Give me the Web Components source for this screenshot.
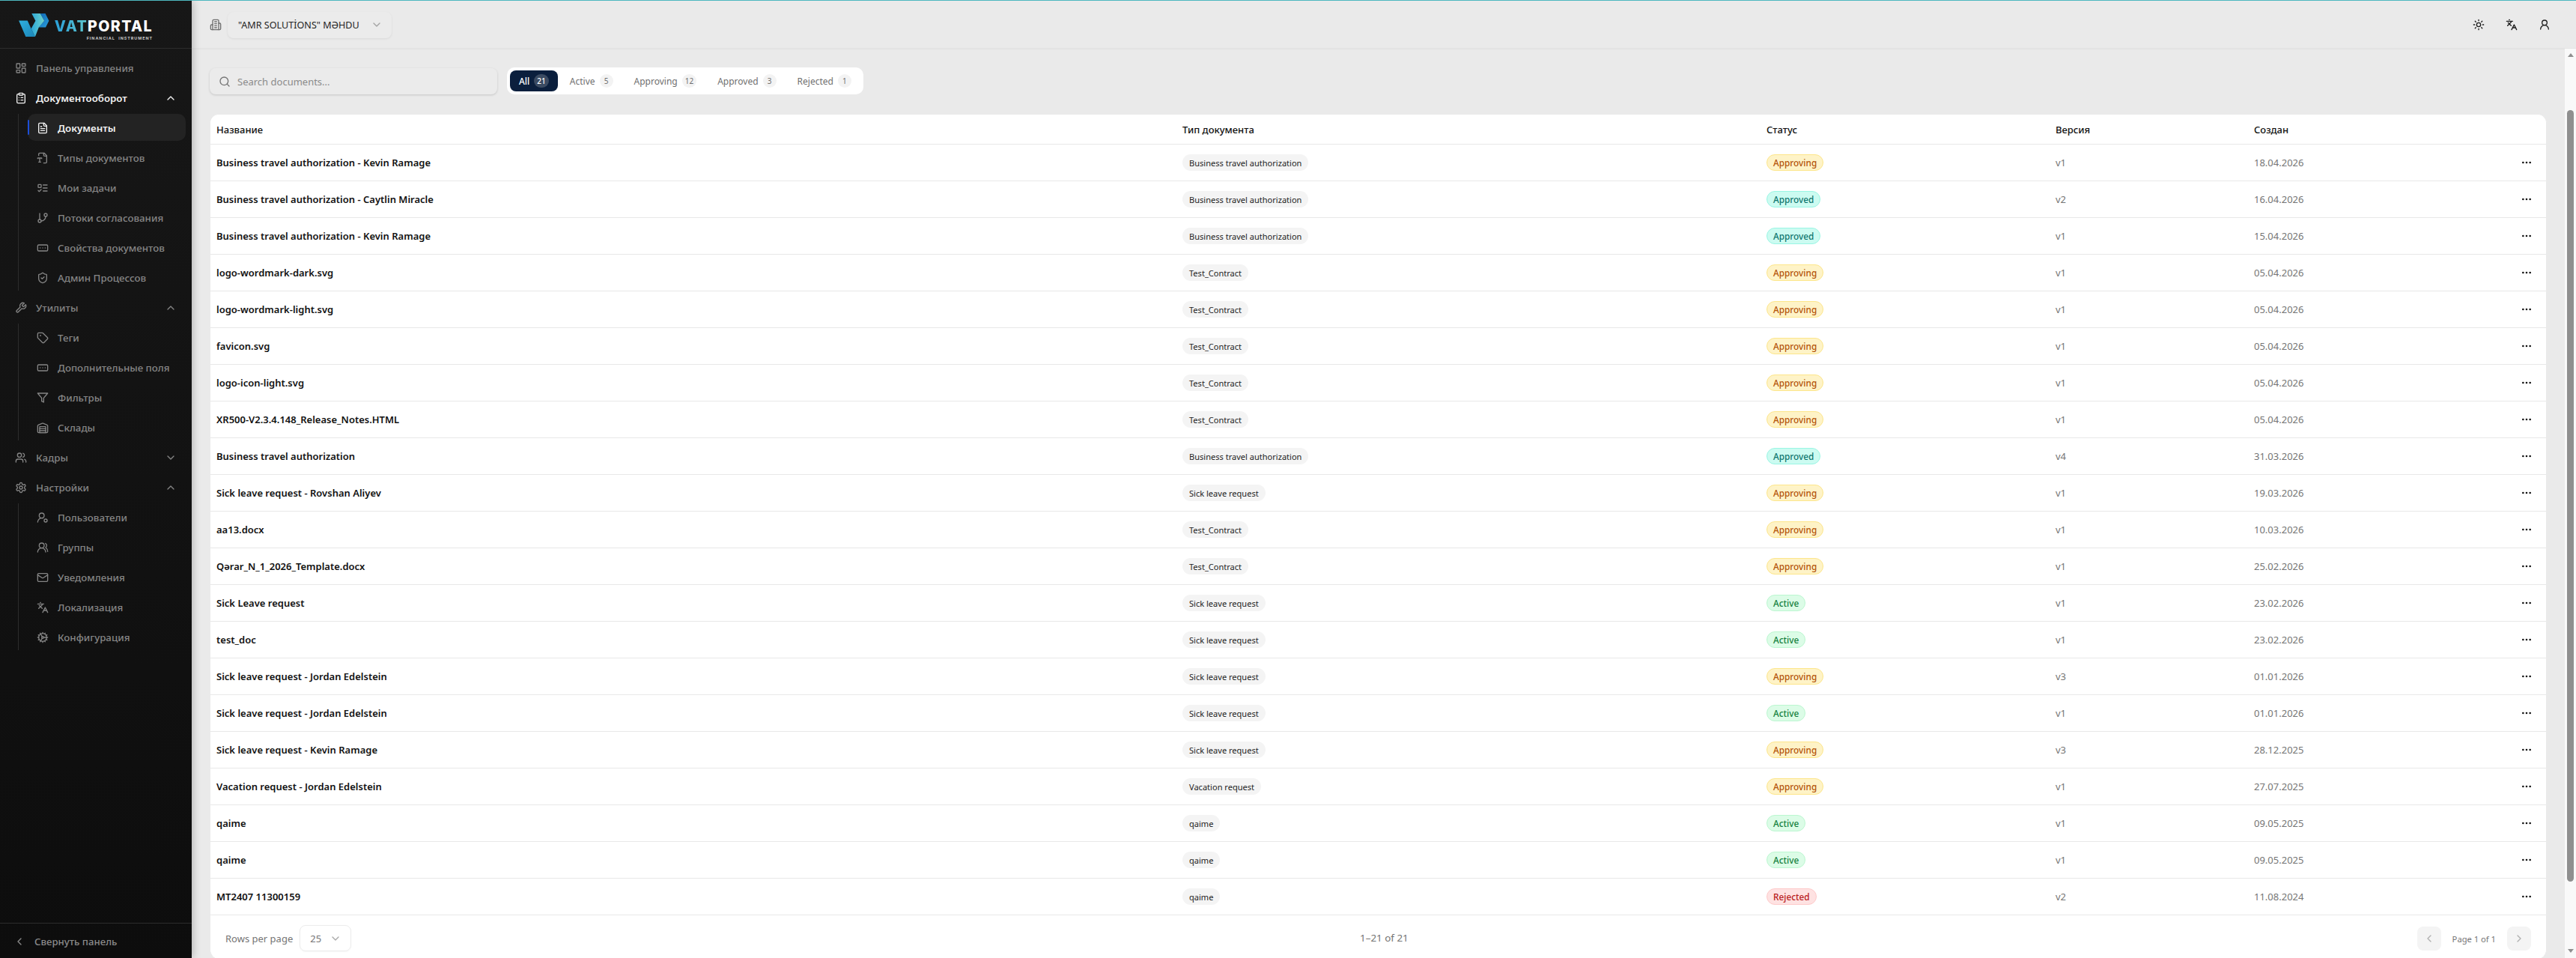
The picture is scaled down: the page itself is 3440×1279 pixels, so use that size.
<!DOCTYPE html>
<html lang="ru">
<head>
<meta charset="utf-8">
<title>VAT Portal</title>
<style>
  html, body { margin: 0; height: 100%; overflow: hidden; }
  body { background: #eaeaea; font-family: "Noto Sans", "Open Sans", sans-serif; font-size: 13px; color: #111; }
</style>
</head>
<body>
<app-shell>
  <app-sidebar slot="sidebar">
    <nav-item icon="dashboard" label="Панель управления"></nav-item>
    <nav-item icon="clipboard" label="Документооборот" chevron="up" open></nav-item>
    <nav-group>
      <nav-item sub active icon="file" label="Документы"></nav-item>
      <nav-item sub icon="filetype" label="Типы документов"></nav-item>
      <nav-item sub icon="todo" label="Мои задачи"></nav-item>
      <nav-item sub icon="branch" label="Потоки согласования"></nav-item>
      <nav-item sub icon="ellipsis" label="Свойства документов"></nav-item>
      <nav-item sub icon="shield" label="Админ Процессов"></nav-item>
    </nav-group>
    <nav-item icon="wrench" label="Утилиты" chevron="up"></nav-item>
    <nav-group>
      <nav-item sub icon="tag" label="Теги"></nav-item>
      <nav-item sub icon="ellipsis" label="Дополнительные поля"></nav-item>
      <nav-item sub icon="funnel" label="Фильтры"></nav-item>
      <nav-item sub icon="warehouse" label="Склады"></nav-item>
    </nav-group>
    <nav-item icon="users" label="Кадры" chevron="down"></nav-item>
    <nav-item icon="settings" label="Настройки" chevron="up"></nav-item>
    <nav-group>
      <nav-item sub icon="usercog" label="Пользователи"></nav-item>
      <nav-item sub icon="usersround" label="Группы"></nav-item>
      <nav-item sub icon="mail" label="Уведомления"></nav-item>
      <nav-item sub icon="languages" label="Локализация"></nav-item>
      <nav-item sub icon="cog" label="Конфигурация"></nav-item>
    </nav-group>
  </app-sidebar>
  <top-bar slot="topbar"></top-bar>
  <doc-toolbar></doc-toolbar>
  <doc-table></doc-table>
</app-shell>

<script>
const ICONS = {
  dashboard: '<rect x="3" y="3" width="7" height="9" rx="1"/><rect x="14" y="3" width="7" height="5" rx="1"/><rect x="14" y="12" width="7" height="9" rx="1"/><rect x="3" y="16" width="7" height="5" rx="1"/>',
  clipboard: '<rect x="8" y="2" width="8" height="4" rx="1"/><path d="M16 4h2a2 2 0 0 1 2 2v14a2 2 0 0 1-2 2H6a2 2 0 0 1-2-2V6a2 2 0 0 1 2-2h2"/><path d="M12 11h4M12 16h4M8 11h.01M8 16h.01"/>',
  file: '<path d="M15 2H6a2 2 0 0 0-2 2v16a2 2 0 0 0 2 2h12a2 2 0 0 0 2-2V7Z"/><path d="M14 2v4a2 2 0 0 0 2 2h4"/><path d="M10 9H8M16 13H8M16 17H8"/>',
  filetype: '<path d="M4 7V4a2 2 0 0 1 2-2h9l5 5v13a2 2 0 0 1-2 2h-4"/><path d="M14 2v4a2 2 0 0 0 2 2h4"/><path d="M2 13v-1h8v1M6 12v8M4 20h4"/>',
  todo: '<rect x="3" y="5" width="6" height="6" rx="1"/><path d="m3 17 2 2 4-4M13 6h8M13 12h8M13 18h8"/>',
  branch: '<path d="M6 3v12"/><circle cx="18" cy="6" r="3"/><circle cx="6" cy="18" r="3"/><path d="M18 9a9 9 0 0 1-9 9"/>',
  ellipsis: '<rect x="2" y="6" width="20" height="12" rx="2"/><path d="M12 12h.01M17 12h.01M7 12h.01"/>',
  shield: '<path d="M20 13c0 5-3.5 7.5-7.66 8.95a1 1 0 0 1-.67-.01C7.5 20.5 4 18 4 13V6a1 1 0 0 1 1-1c2 0 4.5-1.2 6.24-2.72a1.17 1.17 0 0 1 1.52 0C14.51 3.81 17 5 19 5a1 1 0 0 1 1 1z"/><path d="m9 12 2 2 4-4"/>',
  wrench: '<path d="M14.7 6.3a1 1 0 0 0 0 1.4l1.6 1.6a1 1 0 0 0 1.4 0l3.77-3.77a6 6 0 0 1-7.94 7.94l-6.91 6.91a2.12 2.12 0 0 1-3-3l6.91-6.91a6 6 0 0 1 7.94-7.94l-3.76 3.76z"/>',
  tag: '<path d="M12.586 2.586A2 2 0 0 0 11.172 2H4a2 2 0 0 0-2 2v7.172a2 2 0 0 0 .586 1.414l8.704 8.704a2.426 2.426 0 0 0 3.42 0l6.58-6.58a2.426 2.426 0 0 0 0-3.42z"/><circle cx="7.5" cy="7.5" r=".5"/>',
  funnel: '<polygon points="22 3 2 3 10 12.46 10 19 14 21 14 12.46 22 3"/>',
  warehouse: '<path d="M22 8.35V20a2 2 0 0 1-2 2H4a2 2 0 0 1-2-2V8.35A2 2 0 0 1 3.26 6.5l8-3.2a2 2 0 0 1 1.48 0l8 3.2A2 2 0 0 1 22 8.35Z"/><path d="M6 18h12M6 14h12"/><rect x="6" y="10" width="12" height="12"/>',
  users: '<path d="M16 21v-2a4 4 0 0 0-4-4H6a4 4 0 0 0-4 4v2"/><circle cx="9" cy="7" r="4"/><path d="M22 21v-2a4 4 0 0 0-3-3.87M16 3.13a4 4 0 0 1 0 7.75"/>',
  settings: '<path d="M12.22 2h-.44a2 2 0 0 0-2 2v.18a2 2 0 0 1-1 1.73l-.43.25a2 2 0 0 1-2 0l-.15-.08a2 2 0 0 0-2.73.73l-.22.38a2 2 0 0 0 .73 2.73l.15.1a2 2 0 0 1 1 1.72v.51a2 2 0 0 1-1 1.74l-.15.09a2 2 0 0 0-.73 2.73l.22.38a2 2 0 0 0 2.73.73l.15-.08a2 2 0 0 1 2 0l.43.25a2 2 0 0 1 1 1.73V20a2 2 0 0 0 2 2h.44a2 2 0 0 0 2-2v-.18a2 2 0 0 1 1-1.73l.43-.25a2 2 0 0 1 2 0l.15.08a2 2 0 0 0 2.73-.73l.22-.39a2 2 0 0 0-.73-2.73l-.15-.08a2 2 0 0 1-1-1.74v-.5a2 2 0 0 1 1-1.74l.15-.09a2 2 0 0 0 .73-2.73l-.22-.38a2 2 0 0 0-2.73-.73l-.15.08a2 2 0 0 1-2 0l-.43-.25a2 2 0 0 1-1-1.73V4a2 2 0 0 0-2-2z"/><circle cx="12" cy="12" r="3"/>',
  usercog: '<path d="M2 21a8 8 0 0 1 10.434-7.62"/><circle cx="10" cy="8" r="5"/><circle cx="18" cy="18" r="3"/>',
  usersround: '<path d="M18 21a8 8 0 0 0-16 0"/><circle cx="10" cy="8" r="5"/><path d="M22 20c0-3.37-2-6.5-4-8a5 5 0 0 0-.45-8.3"/>',
  mail: '<rect x="2" y="4" width="20" height="16" rx="2"/><path d="m22 7-8.97 5.7a1.94 1.94 0 0 1-2.06 0L2 7"/>',
  languages: '<path d="m5 8 6 6M4 14l6-6 2-3M2 5h12M7 2h1M22 22l-5-10-5 10M14 18h6"/>',
  cog: '<path d="M12 20a8 8 0 1 0 0-16 8 8 0 0 0 0 16Z"/><path d="M12 14a2 2 0 1 0 0-4 2 2 0 0 0 0 4Z"/><path d="M12 2v2M12 22v-2M17 20.66l-1-1.73M11 10.27 7 3.34M20.66 17l-1.73-1M3.34 7l1.73 1M14 12h8M2 12h2M20.66 7l-1.73 1M3.34 17l1.73-1M17 3.34l-1 1.73M11 13.73l-4 6.93"/>',
  building: '<path d="M6 22V4a2 2 0 0 1 2-2h8a2 2 0 0 1 2 2v18Z"/><path d="M6 12H4a2 2 0 0 0-2 2v6a2 2 0 0 0 2 2h2M18 9h2a2 2 0 0 1 2 2v9a2 2 0 0 1-2 2h-2M10 6h4M10 10h4M10 14h4M10 18h4"/>',
  sun: '<circle cx="12" cy="12" r="4"/><path d="M12 2v2M12 20v2M4.93 4.93l1.41 1.41M17.66 17.66l1.41 1.41M2 12h2M20 12h2M6.34 17.66l-1.41 1.41M19.07 4.93l-1.41 1.41"/>',
  user: '<circle cx="12" cy="8" r="5"/><path d="M20 21a8 8 0 0 0-16 0"/>',
  search: '<circle cx="11" cy="11" r="8"/><path d="m21 21-4.3-4.3"/>',
  more: '<circle cx="12" cy="12" r="1"/><circle cx="19" cy="12" r="1"/><circle cx="5" cy="12" r="1"/>',
  up: '<path d="m18 15-6-6-6 6"/>',
  down: '<path d="m6 9 6 6 6-6"/>',
  left: '<path d="m15 18-6-6 6-6"/>',
  right: '<path d="m9 18 6-6-6-6"/>'
};

class UiIcon extends HTMLElement {
  connectedCallback() {
    const size = this.getAttribute('size') || 16;
    const stroke = this.getAttribute('stroke') || 2;
    this.attachShadow({ mode: 'open' }).innerHTML = `
      <style>:host { display: inline-flex; flex: none; width: ${size}px; height: ${size}px; } svg { display: block; }</style>
      <svg width="${size}" height="${size}" viewBox="0 0 24 24" fill="none" stroke="currentColor" stroke-width="${stroke}" stroke-linecap="round" stroke-linejoin="round">${ICONS[this.getAttribute('name')] || ''}</svg>`;
  }
}
customElements.define('ui-icon', UiIcon);

class AppShell extends HTMLElement {
  constructor() {
    super();
    this.attachShadow({ mode: 'open' }).innerHTML = `
      <style>
        :host { display: flex; height: 100vh; box-sizing: border-box; border-top: 1px solid #4db8bf; overflow: hidden; }
        .main { flex: 1; min-width: 0; display: flex; flex-direction: column; }
        .body { flex: 1; min-height: 0; display: flex; }
        .scroll { flex: 1; min-width: 0; padding: 25px 24px 0; display: flex; flex-direction: column; gap: 26px; overflow: hidden; }
        .track { flex: none; width: 15px; background: #f9f9f9; display: flex; flex-direction: column; align-items: center; position: relative; }
        .arrow { width: 0; height: 0; border: 4.5px solid transparent; position: absolute; }
        .arrow.top { top: 6px; border-top: 0; border-bottom: 5px solid #8f8f8f; }
        .arrow.bottom { bottom: 7px; border-bottom: 0; border-top: 5px solid #8f8f8f; }
        .thumb { width: 9px; margin-top: 82px; height: 1030px; border-radius: 5px; background: #8f8f8f; }
      </style>
      <slot name="sidebar"></slot>
      <div class="main">
        <slot name="topbar"></slot>
        <div class="body">
          <div class="scroll"><slot></slot></div>
          <div class="track"><span class="arrow top"></span><div class="thumb"></div><span class="arrow bottom"></span></div>
        </div>
      </div>`;
  }
}
customElements.define('app-shell', AppShell);

class AppSidebar extends HTMLElement {
  constructor() {
    super();
    this.attachShadow({ mode: 'open' }).innerHTML = `
      <style>
        :host { display: flex; flex-direction: column; flex: none; width: 256px; position: relative; z-index: 2;
          background: linear-gradient(180deg, #171717 0, #0d0d0d 100%); box-shadow: 2px 0 10px rgba(0,0,0,.22); color: #858585; }
        .brand { flex: none; height: 64px; box-sizing: border-box; border-bottom: 1px solid #2c2c2c; padding: 16px 0 0 24px; display: flex; gap: 9px; }
        .mark { flex: none; display: block; }
        .word { display: flex; flex-direction: column; align-items: flex-end; width: 129px; }
        .name { font: 800 19.6px/1 Inter, sans-serif; letter-spacing: 1.4px; color: #fff; margin-top: 9px; white-space: nowrap; }
        .name b { font-weight: 800; background: linear-gradient(90deg, #2a9fd8, #5ec7cf); -webkit-background-clip: text; background-clip: text; color: transparent; }
        .tag { font: 700 5.4px/1 Inter, sans-serif; letter-spacing: .95px; color: #c4c4c4; margin-top: 3px; white-space: nowrap; }
        nav { flex: 1; min-height: 0; padding: 7px 8px 0; display: flex; flex-direction: column; gap: 4px; }
        .collapse { flex: none; height: 47px; box-sizing: border-box; border-top: 1px solid #2c2c2c; display: flex; align-items: center; gap: 12px; padding: 2px 0 0 18px; font-size: 13.2px; font-weight: 500; color: #8a8a8a; }
      </style>
      <div class="brand">
        <svg class="mark" width="42" height="33" viewBox="3 4 43 34">
          <defs>
            <linearGradient id="a" x1="0" y1="0" x2="1" y2="1"><stop offset="0" stop-color="#2fb0e0"/><stop offset="1" stop-color="#1b86b8"/></linearGradient>
            <linearGradient id="b" x1="0" y1="0" x2="1" y2="0"><stop offset="0" stop-color="#2aa6d8"/><stop offset="1" stop-color="#6fd3cc"/></linearGradient>
            <linearGradient id="c" x1="0" y1="0" x2="1" y2="1"><stop offset="0" stop-color="#0b62b0"/><stop offset="1" stop-color="#2c9fdc"/></linearGradient>
          </defs>
          <polygon points="33.5,5 40.5,5 45.5,15 41,24 31,24 39,15" fill="url(#c)"/>
          <polygon points="4,14.7 16,14.7 21,26 26.5,37 13.5,37" fill="url(#a)"/>
          <polygon points="21.7,5 33.5,5 39,15 31.5,24 26.5,37 21,26 27,15" fill="url(#b)"/>
        </svg>
        <div class="word">
          <div class="name"><b>VAT</b>PORTAL</div>
          <div class="tag">FINANCIAL&nbsp; INSTRUMENT</div>
        </div>
      </div>
      <nav><slot></slot></nav>
      <div class="collapse"><ui-icon name="left" size="16"></ui-icon><span>Свернуть панель</span></div>`;
  }
}
customElements.define('app-sidebar', AppSidebar);

class NavGroup extends HTMLElement {
  constructor() {
    super();
    this.attachShadow({ mode: 'open' }).innerHTML = `
      <style>
        :host { display: flex; flex-direction: column; gap: 4px; margin-left: 16px; padding-left: 12px; border-left: 1px solid #2c2c2c; }
      </style>
      <slot></slot>`;
  }
}
customElements.define('nav-group', NavGroup);

class NavItem extends HTMLElement {
  connectedCallback() {
    const chevron = this.getAttribute('chevron');
    this.attachShadow({ mode: 'open' }).innerHTML = `
      <style>
        :host { display: flex; align-items: center; gap: 12px; height: 36px; box-sizing: border-box; padding: 1px 12px 0; border-radius: 10px;
          font-weight: 500; font-size: 13.3px; color: #858585; position: relative; white-space: nowrap; }
        :host([open]) { color: #f2f2f2; font-weight: 600; }
        :host([active]) { color: #f2f2f2; font-weight: 600; background: #232323; }
        :host([active])::before { content: ""; position: absolute; left: 0; top: 8px; bottom: 8px; width: 2px; border-radius: 2px; background: #1d4ed8; }
        .label { flex: 1; }
      </style>
      <ui-icon name="${this.getAttribute('icon')}" size="16"></ui-icon>
      <span class="label">${this.getAttribute('label')}</span>
      ${chevron ? `<ui-icon name="${chevron}" size="16"></ui-icon>` : ''}`;
  }
}
customElements.define('nav-item', NavItem);

class TopBar extends HTMLElement {
  constructor() {
    super();
    this.attachShadow({ mode: 'open' }).innerHTML = `
      <style>
        :host { display: flex; align-items: center; flex: none; height: 64px; box-sizing: border-box; border-bottom: 1px solid #e3e3e3; padding: 1px 34px 0 24px; background: #eaeaea; box-shadow: 0 1px 2px rgba(0,0,0,.04); }
        .org { color: #6e6e6e; }
        .select { margin-left: 8px; width: 219px; height: 35px; box-sizing: border-box; padding: 0 12px 0 14px; display: flex; align-items: center; gap: 8px; border-radius: 8px; background: #ebebeb; box-shadow: 0 1px 3px rgba(0,0,0,.08); }
        .select span { flex: 1; white-space: nowrap; color: #1f1f1f; font-size: 12.6px; }
        .select ui-icon { color: #a3a3a3; }
        .actions { margin-left: auto; display: flex; gap: 28px; color: #1c1c1c; }
      </style>
      <ui-icon class="org" name="building" size="16"></ui-icon>
      <div class="select"><span>"AMR SOLUTİONS" MƏHDU</span><ui-icon name="down" size="16"></ui-icon></div>
      <div class="actions">
        <ui-icon name="sun" size="16"></ui-icon>
        <ui-icon name="languages" size="16"></ui-icon>
        <ui-icon name="user" size="16"></ui-icon>
      </div>`;
  }
}
customElements.define('top-bar', TopBar);

class DocToolbar extends HTMLElement {
  constructor() {
    super();
    const tabs = [['All', 21, true], ['Active', 5], ['Approving', 12], ['Approved', 3], ['Rejected', 1]];
    this.attachShadow({ mode: 'open' }).innerHTML = `
      <style>
        :host { display: flex; flex: none; align-items: flex-start; gap: 13px; height: 36px; }
        .search { width: 384px; height: 35px; margin-top: 1px; box-sizing: border-box; padding: 0 12px; display: flex; align-items: center; gap: 9px; border-radius: 8px; background: #ebebeb; box-shadow: 0 1px 3px rgba(0,0,0,.16); color: #8a8a8a; }
        .search ui-icon { color: #737373; }
        .tabs { display: flex; gap: 4px; padding: 4px; height: 36px; box-sizing: border-box; background: #fff; border-radius: 10px; }
        .tab { display: flex; align-items: center; gap: 6px; height: 28px; padding: 0 12px; border-radius: 8px; font-size: 12px; color: #6f6f6f; }
        .tab i { font-style: normal; min-width: 18px; height: 18px; box-sizing: border-box; padding: 0 4px; border-radius: 9px; background: #f3f3f3; display: flex; align-items: center; justify-content: center; font-size: 10px; }
        .tab.on { background: #0b1f3d; color: #fff; font-weight: 500; }
        .tab.on i { background: #3b4b62; color: #fff; }
      </style>
      <div class="search"><ui-icon name="search" size="16"></ui-icon><span>Search documents...</span></div>
      <div class="tabs">
        ${tabs.map(([t, n, on]) => `<div class="tab ${on ? 'on' : ''}">${t}<i>${n}</i></div>`).join('')}
      </div>`;
  }
}
customElements.define('doc-toolbar', DocToolbar);

class StatusBadge extends HTMLElement {
  connectedCallback() {
    const s = this.textContent.trim().toLowerCase();
    const palette = {
      approving: ['#fef3c7', '#fde68a', '#b45309'],
      approved: ['#ccfbf1', '#99f6e4', '#0f766e'],
      active: ['#dcfce7', '#bbf7d0', '#15803d'],
      rejected: ['#fee2e2', '#fecaca', '#b91c1c']
    }[s];
    this.attachShadow({ mode: 'open' }).innerHTML = `
      <style>
        :host { display: inline-flex; align-items: center; height: 22px; box-sizing: border-box; padding: 0 8px; border-radius: 11px; font-size: 11.8px; font-weight: 500; white-space: nowrap;
          background: ${palette[0]}; border: 1px solid ${palette[1]}; color: ${palette[2]}; }
      </style>
      <slot></slot>`;
  }
}
customElements.define('status-badge', StatusBadge);

class TypeChip extends HTMLElement {
  constructor() {
    super();
    this.attachShadow({ mode: 'open' }).innerHTML = `
      <style>
        :host { display: inline-flex; align-items: center; height: 22px; box-sizing: border-box; padding: 0 9px; border-radius: 11px; background: #f4f4f4; color: #222; font-size: 11.05px; white-space: nowrap; }
      </style>
      <slot></slot>`;
  }
}
customElements.define('type-chip', TypeChip);

const BTA = 'Business travel authorization';
const SICK = 'Sick leave request';
const TEST = 'Test_Contract';
const DOCS = [
  ['Business travel authorization - Kevin Ramage', BTA, 'Approving', 'v1', '18.04.2026'],
  ['Business travel authorization - Caytlin Miracle', BTA, 'Approved', 'v2', '16.04.2026'],
  ['Business travel authorization - Kevin Ramage', BTA, 'Approved', 'v1', '15.04.2026'],
  ['logo-wordmark-dark.svg', TEST, 'Approving', 'v1', '05.04.2026'],
  ['logo-wordmark-light.svg', TEST, 'Approving', 'v1', '05.04.2026'],
  ['favicon.svg', TEST, 'Approving', 'v1', '05.04.2026'],
  ['logo-icon-light.svg', TEST, 'Approving', 'v1', '05.04.2026'],
  ['XR500-V2.3.4.148_Release_Notes.HTML', TEST, 'Approving', 'v1', '05.04.2026'],
  ['Business travel authorization', BTA, 'Approved', 'v4', '31.03.2026'],
  ['Sick leave request - Rovshan Aliyev', SICK, 'Approving', 'v1', '19.03.2026'],
  ['aa13.docx', TEST, 'Approving', 'v1', '10.03.2026'],
  ['Qərar_N_1_2026_Template.docx', TEST, 'Approving', 'v1', '25.02.2026'],
  ['Sick Leave request', SICK, 'Active', 'v1', '23.02.2026'],
  ['test_doc', SICK, 'Active', 'v1', '23.02.2026'],
  ['Sick leave request - Jordan Edelstein', SICK, 'Approving', 'v3', '01.01.2026'],
  ['Sick leave request - Jordan Edelstein', SICK, 'Active', 'v1', '01.01.2026'],
  ['Sick leave request - Kevin Ramage', SICK, 'Approving', 'v3', '28.12.2025'],
  ['Vacation request - Jordan Edelstein', 'Vacation request', 'Approving', 'v1', '27.07.2025'],
  ['qaime', 'qaime', 'Active', 'v1', '09.05.2025'],
  ['qaime', 'qaime', 'Active', 'v1', '09.05.2025'],
  ['MT2407 11300159', 'qaime', 'Rejected', 'v2', '11.08.2024']
];

class DocTable extends HTMLElement {
  constructor() {
    super();
    const rows = DOCS.map(([name, type, status, ver, date]) => `
      <div class="row">
        <div class="cell name">${name}</div>
        <div class="cell"><type-chip>${type}</type-chip></div>
        <div class="cell"><status-badge>${status}</status-badge></div>
        <div class="cell dim">${ver}</div>
        <div class="cell dim">${date}</div>
        <div class="cell more"><ui-icon name="more" size="16"></ui-icon></div>
      </div>`).join('');
    this.attachShadow({ mode: 'open' }).innerHTML = `
      <style>
        :host { display: block; flex: none; background: #fff; border-radius: 12px; border: 1px solid #eaeaea; border-bottom: 0; }
        .row { display: grid; grid-template-columns: 1290px 780px 386px 265px 1fr 52px; height: 49px; box-sizing: border-box; border-bottom: 1px solid #e8e8e8; }
        .row.head { height: 40px; font-weight: 500; color: #111; }
        .cell { display: flex; align-items: center; padding: 0 8px; min-width: 0; white-space: nowrap; }
        .name { font-weight: 600; color: #111; }
        .dim { color: #757575; }
        .more { padding: 0; justify-content: center; color: #111; }
        .foot { display: flex; justify-content: space-between; align-items: flex-start; height: 58px; box-sizing: border-box; padding: 13px 20px 0; color: #757575; }
        .rpp { display: flex; align-items: center; gap: 9px; }
        .size { width: 69px; height: 35px; box-sizing: border-box; border: 1px solid #ececec; border-radius: 8px; display: flex; align-items: center; justify-content: space-between; padding: 0 12px 0 13px; box-shadow: 0 1px 2px rgba(0,0,0,.04); }
        .size ui-icon { color: #a8a8a8; }
        .count { margin-top: 8px; font-size: 13.4px; }
        .pager { display: flex; align-items: center; gap: 15px; margin-top: 2px; font-size: 11.2px; }
        .pg { width: 32px; height: 32px; border-radius: 8px; background: #f4f4f4; color: #b0b0b0; display: flex; align-items: center; justify-content: center; }
      </style>
      <div class="row head">
        <div class="cell">Название</div>
        <div class="cell">Тип документа</div>
        <div class="cell">Статус</div>
        <div class="cell">Версия</div>
        <div class="cell">Создан</div>
        <div class="cell"></div>
      </div>
      ${rows}
      <div class="foot">
        <div class="rpp"><span>Rows per page</span><div class="size"><span>25</span><ui-icon name="down" size="16"></ui-icon></div></div>
        <div class="count">1–21 of 21</div>
        <div class="pager">
          <div class="pg"><ui-icon name="left" size="16"></ui-icon></div>
          <span>Page 1 of 1</span>
          <div class="pg"><ui-icon name="right" size="16"></ui-icon></div>
        </div>
      </div>`;
  }
}
customElements.define('doc-table', DocTable);
</script>
</body>
</html>
